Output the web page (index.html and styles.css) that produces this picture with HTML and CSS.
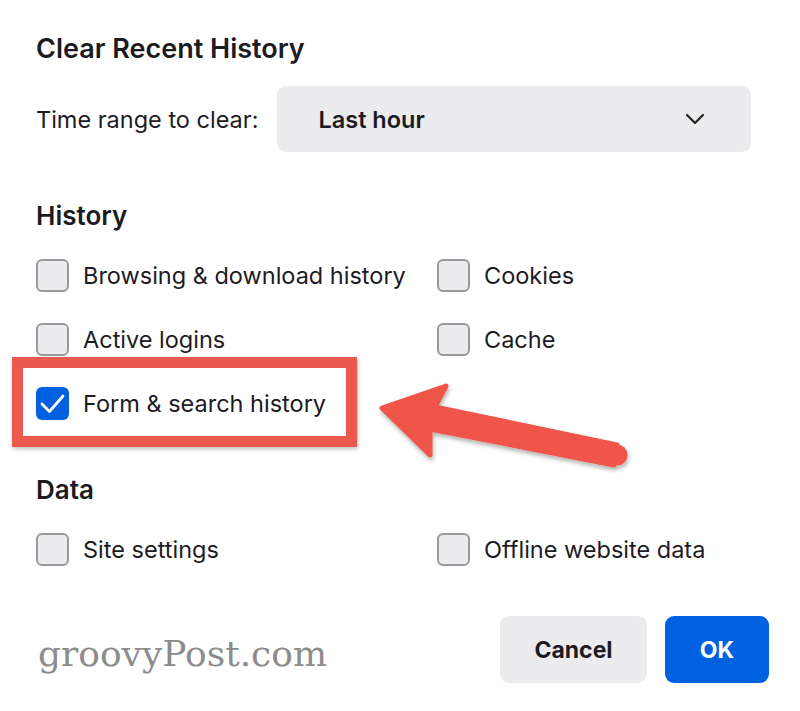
FILE: index.html
```html
<!DOCTYPE html>
<html lang="en">
<head>
    <meta charset="UTF-8">
    <meta name="viewport" content="width=device-width, initial-scale=1.0">
    <title>Clear Recent History</title>
    <link rel="stylesheet" href="styles.css">
</head>
<body>

    <div class="dialog">
        <h1 class="title">Clear Recent History</h1>

        <div class="range-row">
            <span class="range-label">Time range to clear:</span>
            <div class="select">
                <span>Last hour</span>
                <svg class="chevron" width="20" height="12" viewBox="0 0 20 12">
                    <path d="M2 2 L10 10 L18 2" fill="none" stroke="#222" stroke-width="2.2" stroke-linecap="round" stroke-linejoin="round"/>
                </svg>
            </div>
        </div>

        <h2 class="section">History</h2>
        <div class="options">
            <label class="option"><span class="check"></span>Browsing &amp; download history</label>
            <label class="option"><span class="check"></span>Cookies</label>
            <label class="option"><span class="check"></span>Active logins</label>
            <label class="option"><span class="check"></span>Cache</label>
            <label class="option"><span class="check checked">
                <svg width="33" height="33" viewBox="0 0 33 33">
                    <path d="M6 17 L13.5 24.5 L27 9" fill="none" stroke="#fff" stroke-width="2.8" stroke-linecap="round" stroke-linejoin="round"/>
                </svg>
            </span>Form &amp; search history</label>
        </div>

        <h2 class="section data">Data</h2>
        <div class="options">
            <label class="option"><span class="check"></span>Site settings</label>
            <label class="option"><span class="check"></span>Offline website data</label>
        </div>

        <div class="footer">
            <span class="watermark">groovyPost.com</span>
            <div class="buttons">
                <button class="btn cancel">Cancel</button>
                <button class="btn ok">OK</button>
            </div>
        </div>
    </div>

    <!-- annotation drawn over the dialog -->
    <div class="highlight"></div>
    <svg class="arrow" width="800" height="711" viewBox="0 0 800 711">
        <defs>
            <filter id="shade" x="-10%" y="-10%" width="120%" height="130%">
                <feDropShadow dx="1" dy="3" stdDeviation="2" flood-color="#000" flood-opacity="0.3"/>
            </filter>
        </defs>
        <g filter="url(#shade)">
            <polygon points="382,408 446,386 435,407 617,445 614,465 430,429 430,455"
                     fill="#ef5448" stroke="#ef5448" stroke-width="5" stroke-linejoin="round"/>
            <circle cx="617" cy="455" r="10.5" fill="#ef5448"/>
        </g>
    </svg>

</body>
</html>
```

FILE: styles.css
```css
body {
    margin: 0;
    background-color: #fff;
    font-family: Inter, "Noto Sans", sans-serif;
    color: #1c1b22;
}

.dialog {
    width: 800px;
    height: 711px;
    box-sizing: border-box;
    padding: 33px 31px 0 36px;
    display: flex;
    flex-direction: column;
}

.title {
    margin: 0;
    font-size: 27px;
    line-height: 32px;
    font-weight: 600;
}

.range-row {
    display: flex;
    align-items: center;
    gap: 19px;
    margin-top: 21px;
    padding-right: 18px;
}

.range-label {
    font-size: 23.5px;
}

.select {
    flex: 1;
    height: 66px;
    box-sizing: border-box;
    background-color: #ececef;
    border-radius: 9px;
    display: flex;
    align-items: center;
    justify-content: space-between;
    padding: 0 46px 0 41px;
    font-size: 23.5px;
    font-weight: 600;
}

.section {
    margin: 48px 0 0;
    font-size: 26px;
    line-height: 32px;
    font-weight: 600;
}

.section.data {
    margin-top: 54px;
}

.options {
    display: grid;
    grid-template-columns: 401px 1fr;
    row-gap: 31px;
    margin-top: 27px;
}

.option {
    display: flex;
    align-items: center;
    gap: 14px;
    height: 33px;
    font-size: 23.5px;
}

.check {
    width: 33px;
    height: 33px;
    box-sizing: border-box;
    border: 2px solid #9a9a9e;
    border-radius: 6px;
    background-color: #ececef;
    flex-shrink: 0;
}

.check.checked {
    border: none;
    background-color: #0060df;
}

.check svg {
    display: block;
}

.footer {
    display: flex;
    align-items: center;
    justify-content: space-between;
    margin-top: 50px;
}

.watermark {
    font-family: "DejaVu Serif", serif;
    font-size: 36px;
    color: #8c8c8c;
    margin-left: 2px;
    margin-top: 8px;
}

.buttons {
    display: flex;
    gap: 18px;
}

.btn {
    height: 67px;
    border: none;
    border-radius: 9px;
    font-family: Inter, "Noto Sans", sans-serif;
    font-size: 23px;
    font-weight: 700;
    cursor: pointer;
}

.cancel {
    width: 147px;
    background-color: #ececef;
    color: #1c1b22;
}

.ok {
    width: 104px;
    background-color: #0061e0;
    color: #fff;
}

.highlight {
    position: absolute;
    left: 12px;
    top: 357px;
    width: 345px;
    height: 90px;
    box-sizing: border-box;
    border: 11px solid #ec5a4f;
    box-shadow: 1px 2px 4px rgba(0, 0, 0, 0.25);
}

.arrow {
    position: absolute;
    left: 0;
    top: 0;
    pointer-events: none;
}
```
